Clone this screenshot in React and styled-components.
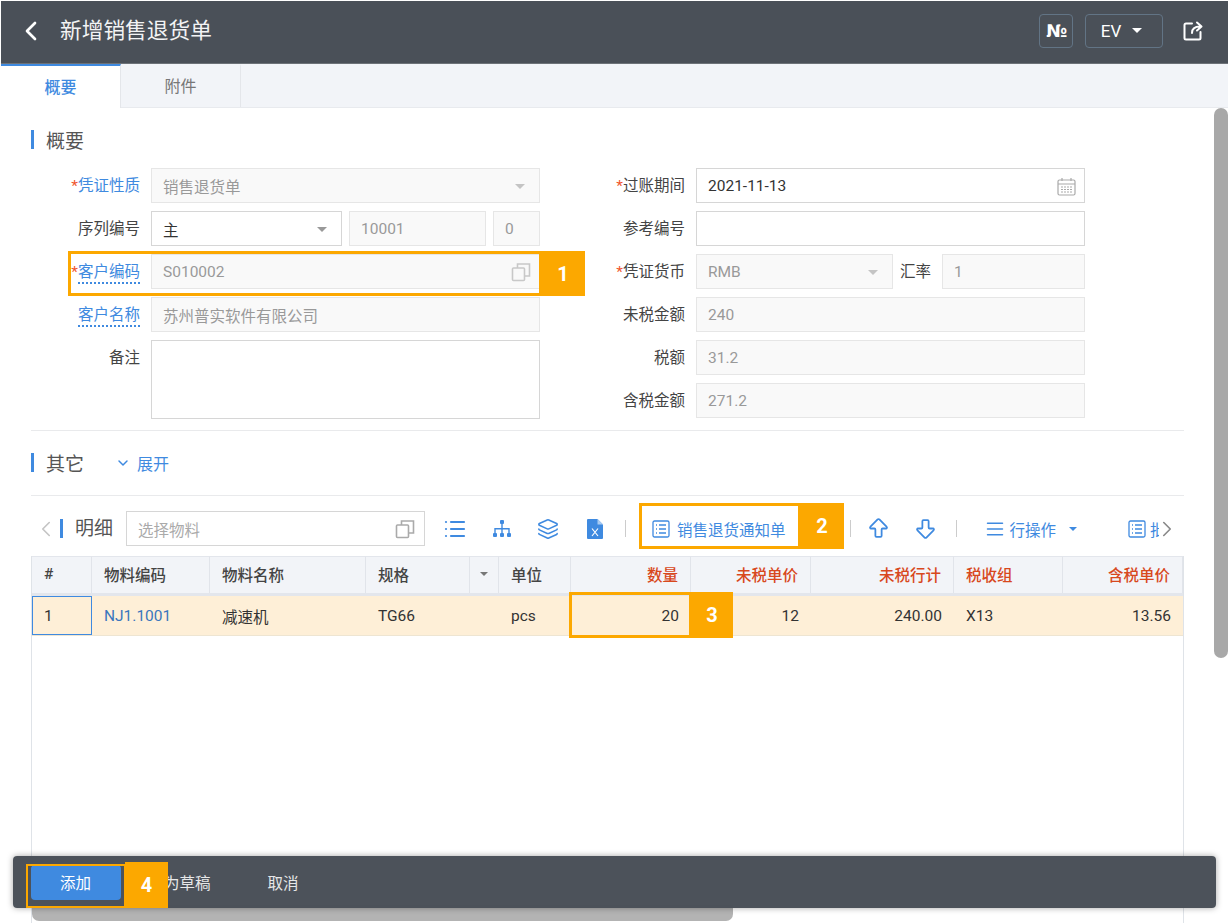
import React from "react";
import styled, { createGlobalStyle } from "styled-components";
import { ChevronLeft, ChevronRight, ChevronDown, List, Layers, AlignJustify, ArrowBigUp, ArrowBigDown } from "lucide-react";

const Global = createGlobalStyle`
  html, body { margin: 0; padding: 0; background: #fff; }
  body { font-family: Roboto, "Noto Sans CJK SC", sans-serif; font-size: 15.5px; color: #333; }
  * { box-sizing: border-box; }
`;

const ORANGE = "#fca800";
const BLUE = "#3f8ae0";

const Page = styled.div`
  position: relative; width: 1230px; height: 923px; overflow: hidden;
  display: flex; flex-direction: column; padding: 1px 2px 0 1px;
`;
const Header = styled.header`
  height: 63px; flex: none; background: #4a5058; color: #fff;
  display: flex; align-items: center; padding: 0 24px 3px 14px;
  border-bottom: 1px solid #6d7278;
`;
const Title = styled.h1`
  margin: 0 0 0 13px; font-size: 21.7px; font-weight: 400; color: #f2f3f4; flex: 1; line-height: 1;
`;
const HeadButton = styled.button`
  height: 34px; width: ${p => p.$w}px; margin-right: ${p => p.$mr}px; background: transparent;
  border: 1px solid #627485; border-radius: 4px; color: #fff; font: 400 17px Roboto, sans-serif;
  display: flex; align-items: center; justify-content: center; gap: 11px; padding: 0 ${p => p.$pr || 0}px 0 0;
`;
const NumberSign = styled.span`
  font: 700 17.5px "DejaVu Sans", sans-serif; letter-spacing: -1px;
`;
const Caret = styled.span`
  width: 0; height: 0; flex: none; border-left: ${p => p.$s || 5}px solid transparent; border-right: ${p => p.$s || 5}px solid transparent;
  border-top: ${p => p.$s || 5}px solid ${p => p.$c || "#fff"}; display: inline-block;
  margin-right: ${p => p.$mr || 0}px; margin-left: ${p => p.$ml || 0}px;
`;
const Tabs = styled.nav`
  height: 44px; flex: none; background: #f2f4f8; display: flex; border-bottom: 1px solid #e8eaee;
`;
const Tab = styled.div`
  width: 120px; display: flex; align-items: center; justify-content: center; padding-bottom: 3px;
  font-size: 16px; font-weight: ${p => p.$active ? 500 : 400};
  color: ${p => p.$active ? BLUE : "#777"};
  background: ${p => p.$active ? "#fff" : "transparent"};
  border-top: 2px solid ${p => p.$active ? BLUE : "transparent"};
  border-right: 1px solid #e4e6ea; margin-bottom: ${p => p.$active ? "-1px" : 0};
`;
const Content = styled.main`
  flex: 1; min-height: 0; display: flex; flex-direction: column; padding: 0 44px 0 30px;
`;
const SectionTitle = styled.div`
  display: flex; align-items: center; height: 19px; margin-top: ${p => p.$mt}px;
  border-left: 3px solid ${BLUE}; padding-left: 12px; font-size: 19px; color: #555; gap: 31px;
`;
const Expand = styled.span`
  display: flex; align-items: center; gap: 6px; font-size: 16px; color: ${BLUE};
`;
const FormGrid = styled.div`
  display: grid; grid-template-columns: 509px 485px; column-gap: 60px; margin-top: 19px;
`;
const FormCol = styled.div`display: flex; flex-direction: column; gap: 8px;`;
const Row = styled.div`position: relative; display: flex; gap: 7px; align-items: ${p => p.$top ? "flex-start" : "center"};`;
const Label = styled.label`
  width: ${p => p.$w || 109}px; flex: none; margin-right: 4px; text-align: right; font-size: 15.5px; color: ${p => p.$link ? BLUE : "#444"};
  line-height: 20px; padding-top: ${p => p.$top ? 8 : 1}px; white-space: nowrap;
`;
const Star = styled.i`color: #f0562e; font-style: normal;`;
const Dashed = styled.span`border-bottom: 2px dotted ${BLUE}; padding-bottom: 1px;`;
const Field = styled.div`
  height: ${p => p.$h || 35}px; flex: ${p => p.$w ? "none" : 1}; width: ${p => p.$w ? p.$w + "px" : "auto"};
  border: 1px solid ${p => p.$off ? "#e6e6e6" : "#d6d6d6"}; background: ${p => p.$off ? "#f9f9f9" : "#fff"};
  color: ${p => p.$off ? "#999" : "#333"}; display: flex; align-items: center; justify-content: space-between;
  padding: 1px 8px 0 11px; font-size: 15.5px; min-width: 0; white-space: nowrap;
`;
const Divider = styled.div`height: 1px; background: #e9eaec; flex: none; margin-top: ${p => p.$mt}px;`;
const Toolbar = styled.div`
  height: 37px; margin-top: 14px; flex: none; display: flex; align-items: center; position: relative;
  color: ${BLUE}; & svg { flex: none; }
`;
const SearchBox = styled.div`
  width: 299px; height: 35px; border: 1px solid #d6d6d6; display: flex; align-items: center; justify-content: space-between;
  padding: 0 9px 0 11px; color: #aaa; font-size: 15.5px; margin-left: 13px; flex: none;
`;
const DetailTitle = styled.span`
  border-left: 3px solid ${BLUE}; height: 19px; line-height: 19px; padding-left: 12px; font-size: 19px; color: #555; margin-left: 10px; flex: none;
`;
const ToolIcon = styled.span`
  width: ${p => p.$w || 46.5}px; margin-left: ${p => p.$ml || 0}px; display: flex; justify-content: center; flex: none;
`;
const Sep = styled.span`width: 1px; height: 17px; background: #ccc; flex: none; margin: 0 ${p => p.$m}px 0 ${p => p.$l}px;`;
const ToolText = styled.span`
  display: flex; align-items: center; gap: ${p => p.$gap}px; font-size: 15.5px; color: ${BLUE}; white-space: nowrap; flex: none;
`;
const ClipEnd = styled.span`
  width: 31px; margin-left: 51px; overflow: hidden; white-space: nowrap; display: flex; align-items: center; gap: 4px; color: ${BLUE}; flex: none; font-size: 15.5px;
`;
const TableBox = styled.div`
  flex: 1; margin-top: 9px; border-left: 1px solid #dfe3e8; border-right: 1px solid #dfe3e8; position: relative;
`;
const GridRow = styled.div`
  display: grid; grid-template-columns: 60px 118px 156px 104px 29px 72px 120px 120px 143px 109px 120px;
  height: ${p => p.$h}px; background: ${p => p.$bg}; border-bottom: ${p => p.$line ? "3px solid #e3e6ec" : "1px solid #eee5d2"};
`;
const HeadCell = styled.div`
  display: flex; align-items: center; padding: 0 12px 2px; font-size: 15.5px; font-weight: 500;
  justify-content: ${p => p.$r ? "flex-end" : p.$c ? "center" : "flex-start"};
  color: ${p => p.$red ? "#d8481d" : "#444"}; border-right: 1px solid #e1e4ea; border-top: 1px solid #e3e6ec;
`;
const Cell = styled.div`
  display: flex; align-items: center; padding: 0 12px; font-size: 15.5px; color: ${p => p.$link ? "#3a76bd" : "#333"};
  justify-content: ${p => p.$r ? "flex-end" : "flex-start"};
  ${p => p.$focus && `border: 1px solid ${BLUE}; padding-left: 11px;`}
`;
const Highlight = styled.div`
  position: absolute; left: ${p => p.$x}px; top: ${p => p.$y}px; width: ${p => p.$w}px; height: ${p => p.$h}px;
  border: ${p => p.$b || 3}px solid ${ORANGE}; pointer-events: none; z-index: 5;
`;
const Badge = styled.div`
  position: absolute; left: ${p => p.$x}px; top: ${p => p.$y}px; width: ${p => p.$w}px; height: ${p => p.$h}px;
  background: ${ORANGE}; color: #fff; font: 700 20px Roboto, sans-serif; display: flex; align-items: center; justify-content: center; z-index: 6;
`;
const VScroll = styled.div`
  position: absolute; left: 1214px; top: 108px; width: 14px; height: 550px; background: #a8a8a8; border-radius: 7px;
`;
const HScroll = styled.div`
  position: absolute; left: 32px; top: 905px; width: 701px; height: 16px; background: #b3b3b3; border-radius: 0 0 7px 7px;
`;
const BottomBar = styled.footer`
  position: absolute; left: 13px; top: 856px; width: 1203px; height: 52px; background: rgba(72,79,87,.98);
  border-radius: 4px; box-shadow: 0 0 6px rgba(0,0,0,.35); display: flex; align-items: center; padding-left: 18px; z-index: 4;
`;
const PrimaryBtn = styled.button`
  width: 90px; height: 35px; background: ${BLUE}; color: #fff; border: 0; border-radius: 4px; font: 15.5px Roboto, "Noto Sans CJK SC", sans-serif; padding: 0 1px 0 0; flex: none;
`;
const GhostBtn = styled.button`
  background: transparent; border: 0; color: #e6e7e8; font: 15.5px Roboto, "Noto Sans CJK SC", sans-serif; padding: 0; margin-left: ${p => p.$ml}px; white-space: nowrap;
`;

const CopyIcon = ({ c = "#c8c8c8" }) => (
  <svg width="20" height="20" viewBox="0 0 20 20" fill="none" stroke={c} strokeWidth="1.6">
    <rect x="1.5" y="6" width="12" height="12.5" rx="1" />
    <path d="M6.5 6V2h12v12h-5" />
  </svg>
);
const CalIcon = () => (
  <svg width="19" height="19" viewBox="0 0 19 19" fill="none" stroke="#a9a9a9" strokeWidth="1.2">
    <rect x="1" y="3" width="17" height="15" rx="1.5" />
    <path d="M1 7h17M5 1v3M14 1v3" />
    <path d="M4 10h11M4 12.5h11M4 15h11" strokeDasharray="2 1" />
  </svg>
);
const ExportIcon = () => (
  <svg width="22" height="22" viewBox="0 0 22 22" fill="none" stroke="#fff" strokeWidth="2" strokeLinecap="round" strokeLinejoin="round">
    <path d="M10 3.5H4a1.5 1.5 0 0 0-1.500 1.500v13a1.500 1.500 0 0 0 1.500 1.500h13a1.500 1.500 0 0 0 1.500-1.500v-6" />
    <path d="M10 13c0-4 3-6.500 8-6.500M15 2.500l4.500 4-4.500 4" />
  </svg>
);
const TreeIcon = () => (
  <svg width="20" height="20" viewBox="0 0 20 20" fill={BLUE}>
    <rect x="8" y="1" width="4" height="4" rx="1" />
    <rect x="1" y="14" width="4" height="4" rx="1" />
    <rect x="8" y="14" width="4" height="4" rx="1" />
    <rect x="15" y="14" width="4" height="4" rx="1" />
    <path d="M9.300 5h1.400v4H17.700v5h-1.400v-3.600h-5.600V14H9.300v-3.600H3.700V14H2.300V9h7z" />
  </svg>
);
const XlsIcon = () => (
  <svg width="16" height="20" viewBox="0 0 16 20">
    <path d="M1 0h9.500L16 5.500V19a1 1 0 0 1-1 1H1a1 1 0 0 1-1-1V1a1 1 0 0 1 1-1z" fill={BLUE} />
    <path d="M10.500 0v5.500H16z" fill="#a9cbf2" />
    <path d="M5 9.500l6 7.500M11 9.500l-6 7.500" stroke="#fff" strokeWidth="1.200" />
  </svg>
);
const DocIcon = () => (
  <svg width="18" height="18" viewBox="0 0 18 18" fill="none" stroke={BLUE} strokeWidth="1.300">
    <rect x="1" y="1" width="16" height="16" rx="1.500" />
    <path d="M4 5h1M7 5h7M4 9h1M7 9h7M4 13h1M7 13h7" />
  </svg>
);

const TH = [
  ["#", {}], ["物料编码", {}], ["物料名称", {}], ["规格", {}], [<Caret key="c" $s={4} $c="#777" />, { $c: true }], ["单位", {}],
  ["数量", { $r: true, $red: true }], ["未税单价", { $r: true, $red: true }], ["未税行计", { $r: true, $red: true }],
  ["税收组", { $red: true }], ["含税单价", { $r: true, $red: true }],
];

export default function App() {
  return (
    <Page>
      <Global />
      <Header>
        <ChevronLeft size={32} color="#fff" strokeWidth={2} />
        <Title>新增销售退货单</Title>
        <HeadButton $w={34} $mr={12}><NumberSign>№</NumberSign></HeadButton>
        <HeadButton $w={78} $mr={19} $pr={5}>EV <Caret /></HeadButton>
        <ExportIcon />
      </Header>
      <Tabs>
        <Tab $active>概要</Tab>
        <Tab>附件</Tab>
      </Tabs>
      <Content>
        <SectionTitle $mt={22}>概要</SectionTitle>
        <FormGrid>
          <FormCol>
            <Row>
              <Label $link><Star>*</Star>凭证性质</Label>
              <Field $off>销售退货单<Caret $c="#c4c4c4" $mr={6} /></Field>
            </Row>
            <Row>
              <Label>序列编号</Label>
              <Field $w={191}>主<Caret $c="#999" $mr={6} /></Field>
              <Field $off $w={137}>10001</Field>
              <Field $off>0</Field>
            </Row>
            <Row>
              <Label $link><Star>*</Star><Dashed>客户编码</Dashed></Label>
              <Field $off>S010002<CopyIcon /></Field>
              <Highlight $x={37} $y={-3} $w={474} $h={45} />
              <Badge $x={510} $y={-3} $w={44} $h={45}>1</Badge>
            </Row>
            <Row>
              <Label $link><Dashed>客户名称</Dashed></Label>
              <Field $off>苏州普实软件有限公司</Field>
            </Row>
            <Row $top>
              <Label $top>备注</Label>
              <Field $h={79} />
            </Row>
          </FormCol>
          <FormCol>
            <Row>
              <Label $w={85}><Star>*</Star>过账期间</Label>
              <Field>2021-11-13<CalIcon /></Field>
            </Row>
            <Row>
              <Label $w={85}>参考编号</Label>
              <Field />
            </Row>
            <Row>
              <Label $w={85}><Star>*</Star>凭证货币</Label>
              <Field $off $w={197}>RMB<Caret $c="#c4c4c4" $mr={6} /></Field>
              <Label $w={31}>汇率</Label>
              <Field $off>1</Field>
            </Row>
            <Row>
              <Label $w={85}>未税金额</Label>
              <Field $off>240</Field>
            </Row>
            <Row>
              <Label $w={85}>税额</Label>
              <Field $off>31.2</Field>
            </Row>
            <Row>
              <Label $w={85}>含税金额</Label>
              <Field $off>271.2</Field>
            </Row>
          </FormCol>
        </FormGrid>
        <Divider $mt={11} />
        <SectionTitle $mt={22}>其它
          <Expand><ChevronDown size={16} strokeWidth={2.2} />展开</Expand>
        </SectionTitle>
        <Divider $mt={23} />
        <Toolbar>
          <ChevronLeft size={26} color="#c4c4c4" strokeWidth={1.5} style={{ marginLeft: 2, marginRight: -9 }} />
          <DetailTitle>明细</DetailTitle>
          <SearchBox>选择物料<CopyIcon c="#aaa" /></SearchBox>
          <ToolIcon $ml={7}><List size={24} strokeWidth={2.2} /></ToolIcon>
          <ToolIcon><TreeIcon /></ToolIcon>
          <ToolIcon><Layers size={22} strokeWidth={1.7} /></ToolIcon>
          <ToolIcon><XlsIcon /></ToolIcon>
          <Sep $l={7} $m={26} />
          <ToolText $gap={7}><DocIcon />销售退货通知单</ToolText>
          <Sep $l={64} $m={18} />
          <ToolIcon $w={20}><ArrowBigUp size={25} strokeWidth={1.7} /></ToolIcon>
          <ToolIcon $w={20} $ml={27}><ArrowBigDown size={25} strokeWidth={1.7} /></ToolIcon>
          <Sep $l={20} $m={28} />
          <ToolText $gap={5}><AlignJustify size={20} strokeWidth={1.8} />行操作<Caret $s={4} $c={BLUE} $ml={8} /></ToolText>
          <ClipEnd><DocIcon />批</ClipEnd>
          <ChevronRight size={26} color="#888" strokeWidth={1.5} style={{ marginLeft: -5 }} />
          <Highlight $x={608} $y={-7} $w={162} $h={46} />
          <Badge $x={769} $y={-7} $w={44} $h={46}>2</Badge>
        </Toolbar>
        <TableBox>
          <GridRow $h={40} $bg="#f2f4f8" $line>
            {TH.map(([t, p], i) => <HeadCell key={i} {...p}>{t}</HeadCell>)}
          </GridRow>
          <GridRow $h={40} $bg="#feefd7">
            <Cell $focus>1</Cell>
            <Cell $link>NJ1.1001</Cell>
            <Cell>减速机</Cell>
            <Cell>TG66</Cell>
            <Cell />
            <Cell>pcs</Cell>
            <Cell $r>20</Cell>
            <Cell $r>12</Cell>
            <Cell $r>240.00</Cell>
            <Cell>X13</Cell>
            <Cell $r>13.56</Cell>
          </GridRow>
          <Highlight $x={537} $y={36} $w={123} $h={46} />
          <Badge $x={659} $y={36} $w={42} $h={46}>3</Badge>
        </TableBox>
      </Content>
      <VScroll />
      <HScroll />
      <BottomBar>
        <PrimaryBtn>添加</PrimaryBtn>
        <GhostBtn $ml={12}>保存为草稿</GhostBtn>
        <GhostBtn $ml={57}>取消</GhostBtn>
        <Highlight $x={13} $y={8} $w={100} $h={44} $b={2} />
        <Badge $x={112} $y={6} $w={43} $h={46}>4</Badge>
      </BottomBar>
    </Page>
  );
}
